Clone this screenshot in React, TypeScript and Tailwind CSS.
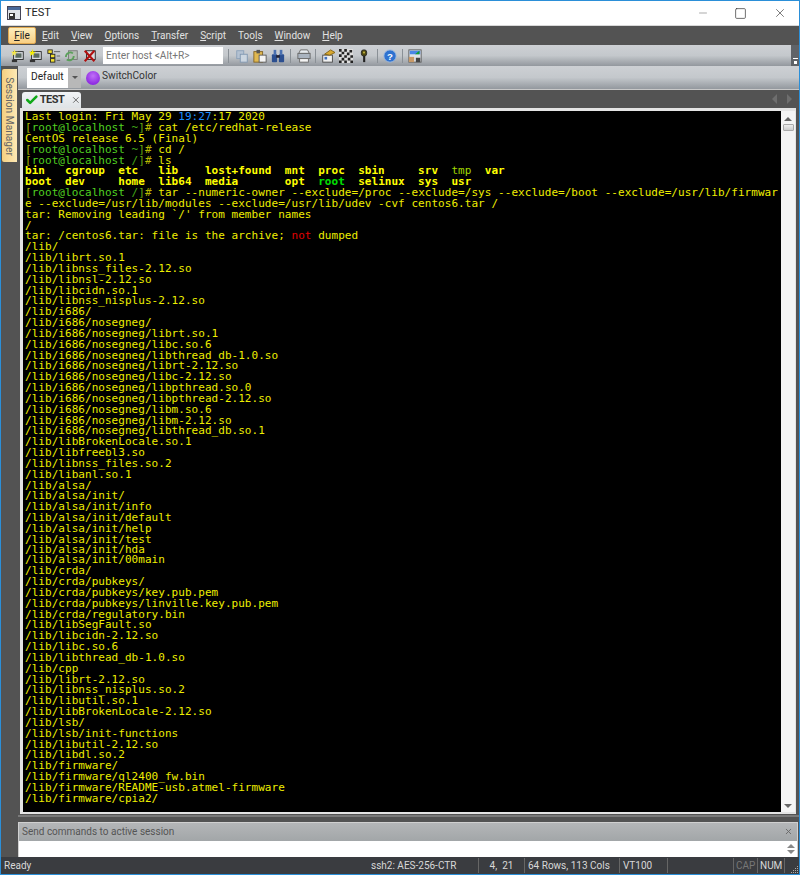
import React from 'react';
import { Check, X, Minus, Square } from 'lucide-react';

type Seg = { t: string; c?: string };

const YELLOW = 'text-[#eeee00]';
const BOLD = 'font-bold text-[#ffff00]';

const prompt = (dir: string): Seg[] => [
  { t: '[', c: 'text-[#a8b800]' },
  { t: 'root@localhost', c: 'text-[#50d020]' },
  { t: ` ${dir}`, c: 'text-[#40a818]' },
  { t: ']', c: 'text-[#68a810]' },
  { t: '#', c: 'text-[#b8b800]' },
];

const paths = `/lib/
/lib/librt.so.1
/lib/libnss_files-2.12.so
/lib/libnsl-2.12.so
/lib/libcidn.so.1
/lib/libnss_nisplus-2.12.so
/lib/i686/
/lib/i686/nosegneg/
/lib/i686/nosegneg/librt.so.1
/lib/i686/nosegneg/libc.so.6
/lib/i686/nosegneg/libthread_db-1.0.so
/lib/i686/nosegneg/librt-2.12.so
/lib/i686/nosegneg/libc-2.12.so
/lib/i686/nosegneg/libpthread.so.0
/lib/i686/nosegneg/libpthread-2.12.so
/lib/i686/nosegneg/libm.so.6
/lib/i686/nosegneg/libm-2.12.so
/lib/i686/nosegneg/libthread_db.so.1
/lib/libBrokenLocale.so.1
/lib/libfreebl3.so
/lib/libnss_files.so.2
/lib/libanl.so.1
/lib/alsa/
/lib/alsa/init/
/lib/alsa/init/info
/lib/alsa/init/default
/lib/alsa/init/help
/lib/alsa/init/test
/lib/alsa/init/hda
/lib/alsa/init/00main
/lib/crda/
/lib/crda/pubkeys/
/lib/crda/pubkeys/key.pub.pem
/lib/crda/pubkeys/linville.key.pub.pem
/lib/crda/regulatory.bin
/lib/libSegFault.so
/lib/libcidn-2.12.so
/lib/libc.so.6
/lib/libthread_db-1.0.so
/lib/cpp
/lib/librt-2.12.so
/lib/libnss_nisplus.so.2
/lib/libutil.so.1
/lib/libBrokenLocale-2.12.so
/lib/lsb/
/lib/lsb/init-functions
/lib/libutil-2.12.so
/lib/libdl.so.2
/lib/firmware/
/lib/firmware/ql2400_fw.bin
/lib/firmware/README-usb.atmel-firmware
/lib/firmware/cpia2/`.split('\n');

const head: Seg[][] = [
  [{ t: 'Last login: Fri May 29 ' }, { t: '19:27', c: 'text-[#1e90ff]' }, { t: ':17 2020' }],
  [...prompt('~'), { t: ' cat /etc/redhat-release' }],
  [{ t: 'CentOS release 6.5 (Final)' }],
  [...prompt('~'), { t: ' cd /' }],
  [...prompt('/'), { t: ' ls' }],
  [{ t: 'bin   cgroup  etc   lib    lost+found  mnt  proc  sbin     srv  ', c: BOLD }, { t: 'tmp', c: 'text-[#a0d800]' }, { t: '  var', c: BOLD }],
  [{ t: 'boot  dev     home  lib64  media       opt  ', c: BOLD }, { t: 'root', c: 'font-bold text-[#00e000]' }, { t: '  selinux  sys  usr', c: BOLD }],
  [...prompt('/'), { t: ' tar --numeric-owner --exclude=/proc --exclude=/sys --exclude=/boot --exclude=/usr/lib/firmwar' }],
  [{ t: 'e --exclude=/usr/lib/modules --exclude=/usr/lib/udev -cvf centos6.tar /' }],
  [{ t: "tar: Removing leading `/' from member names" }],
  [{ t: '/' }],
  [{ t: 'tar: /centos6.tar: file is the archive; ' }, { t: 'not', c: 'text-[#e00000]' }, { t: ' dumped' }],
];

const lines: Seg[][] = [...head, ...paths.map((p) => [{ t: p }])];

const menus: [string, string, string][] = [
  ['', 'F', 'ile'], ['', 'E', 'dit'], ['', 'V', 'iew'], ['', 'O', 'ptions'], ['', 'T', 'ransfer'],
  ['', 'S', 'cript'], ['Too', 'l', 's'], ['', 'W', 'indow'], ['', 'H', 'elp'],
];

const ScreenIcon = ({ accent }: { accent: string }) => (
  <svg width="14" height="14" viewBox="0 0 16 16">
    <rect x="3" y="3" width="11" height="9" fill="#d8dce0" stroke="#222" />
    <rect x="5" y="5" width="7" height="5" fill="#5a6a60" />
    <rect x="1" y="12" width="6" height="3" fill="#333" />
    <path d="M4 0 L5 3 L8 3 L5 5 L6 8 L4 6 L1 8 L2 5 L0 3 L3 3Z" fill={accent} />
  </svg>
);

const Toolbar = () => (
  <div className="flex h-[21px] shrink-0 items-center bg-gradient-to-b from-[#cdd0d4] via-[#c4c8cc] to-[#93989e] pl-[10px]">
    <div className="flex items-center gap-[4px]">
      <ScreenIcon accent="#f6e84a" />
      <ScreenIcon accent="#f6f000" />
      <svg width="14" height="14" viewBox="0 0 16 16">
        <rect x="1" y="1" width="5" height="4" fill="#f4e030" stroke="#222" />
        <rect x="4" y="6" width="5" height="4" fill="#f4e030" stroke="#222" />
        <rect x="4" y="11" width="5" height="4" fill="#f4e030" stroke="#222" />
        <path d="M8 3h7M11 8h4M11 13h4" stroke="#555" />
      </svg>
      <svg width="14" height="14" viewBox="0 0 16 16">
        <rect x="4" y="2" width="10" height="10" fill="#b4bcb4" stroke="#777" />
        <path d="M1 9a5 5 0 0 1 8-4M10 8a5 5 0 0 1-8 4" fill="none" stroke="#5aa05a" strokeWidth="2" />
      </svg>
      <svg width="14" height="14" viewBox="0 0 16 16">
        <rect x="4" y="2" width="10" height="10" fill="#d8dce0" stroke="#222" />
        <path d="M2 2 L13 14 M13 2 L2 14" stroke="#b01010" strokeWidth="2.4" />
      </svg>
    </div>
    <div className="ml-[6px] flex h-[17px] w-[120px] items-center bg-white pl-[3px] text-[#777]">
      Enter host &lt;Alt+R&gt;
    </div>
    <div className="ml-[5px] mr-[6px] h-[14px] w-px bg-[#8a9096]" />
    <div className="flex items-center gap-[4px]">
      <svg width="14" height="14" viewBox="0 0 16 16">
        <rect x="2" y="2" width="8" height="9" fill="#b4c2d2" stroke="#8aa0b8" />
        <rect x="6" y="6" width="8" height="9" fill="#ccd6e0" stroke="#7f96b0" />
      </svg>
      <svg width="14" height="14" viewBox="0 0 16 16">
        <rect x="1" y="3" width="10" height="12" fill="#e0b850" stroke="#806020" />
        <rect x="4" y="1" width="4" height="4" fill="#555" />
        <rect x="7" y="7" width="8" height="8" fill="#f4f4f4" stroke="#555" />
      </svg>
      <svg width="14" height="14" viewBox="0 0 16 16">
        <rect x="1" y="6" width="6" height="9" rx="1" fill="#2c4f90" />
        <rect x="9" y="6" width="6" height="9" rx="1" fill="#2c4f90" />
        <rect x="3" y="1" width="3" height="6" fill="#4a70b0" />
        <rect x="10" y="1" width="3" height="6" fill="#4a70b0" />
        <rect x="6" y="7" width="4" height="3" fill="#223" />
      </svg>
    </div>
    <div className="ml-[5px] mr-[6px] h-[14px] w-px bg-[#8a9096]" />
    <svg width="14" height="14" viewBox="0 0 16 16">
      <path d="M4 1h8l2 4H2z" fill="#e8ecf0" stroke="#666" />
      <rect x="1" y="5" width="14" height="6" fill="#aab4c0" stroke="#666" />
      <rect x="3" y="11" width="10" height="4" fill="#f4f4f4" stroke="#666" />
    </svg>
    <div className="ml-[4px] mr-[5px] h-[14px] w-px bg-[#8a9096]" />
    <div className="flex items-center gap-[4px]">
      <svg width="14" height="14" viewBox="0 0 16 16">
        <rect x="2" y="7" width="11" height="8" fill="#f0f0f0" stroke="#444" />
        <rect x="4" y="9" width="3" height="3" fill="#4070c0" />
        <path d="M4 6 L11 1 L16 4 L10 7z" fill="#d8a830" stroke="#806010" />
      </svg>
      <svg width="14" height="14" viewBox="0 0 16 16">
        <rect width="16" height="16" fill="#dddddd" />
        <path d="M0 0h3v3H0zM6 0h3v3H6zM12 1h3v3h-3zM3 3h3v3H3zM9 4h3v3H9zM0 6h3v3H0zM6 7h3v3H6zM13 7h3v3h-3zM3 10h3v3H3zM10 10h3v3h-3zM0 13h3v3H0zM6 13h3v3H6zM13 13h3v3h-3z" fill="#222" />
      </svg>
      <svg width="14" height="14" viewBox="0 0 16 16">
        <rect x="5" y="1" width="6" height="7" rx="2.5" fill="#504a10" stroke="#222" />
        <rect x="7" y="8" width="2.4" height="7" fill="#222" />
        <rect x="7" y="3" width="2" height="2" fill="#c8b840" />
      </svg>
    </div>
    <div className="ml-[6px] mr-[5px] h-[14px] w-px bg-[#8a9096]" />
    <svg width="14" height="14" viewBox="0 0 16 16">
      <circle cx="8" cy="8" r="7" fill="#2f72d0" stroke="#9ab8e0" />
      <text x="8" y="12" textAnchor="middle" fontSize="11" fontWeight="700" fill="#fff" fontFamily="Liberation Sans, sans-serif">?</text>
    </svg>
    <div className="ml-[5px] mr-[5px] h-[14px] w-px bg-[#8a9096]" />
    <svg width="14" height="14" viewBox="0 0 16 16">
      <rect x="1" y="1" width="14" height="14" fill="#dfe3e8" stroke="#555" />
      <rect x="2" y="2" width="12" height="4" fill="#4a86e8" />
      <rect x="1" y="9" width="6" height="6" fill="#c89a68" />
      <path d="M8 6 L13 2 L13 6z" fill="#10a030" />
      <rect x="9" y="10" width="5" height="5" fill="#444" />
    </svg>
    <div className="ml-auto flex h-full w-[8px] flex-col items-center justify-end bg-[#5f6368] pb-[2px]">
      <div className="mb-[2px] h-px w-[5px] bg-white" />
      <div className="h-[3px] w-[3px] bg-white" />
    </div>
  </div>
);

export default function App() {
  return (
    <div className="flex h-[875px] w-[800px] flex-col overflow-hidden border border-[#2b8fd8] bg-[#535353] text-[10.2px] [font-family:Roboto,sans-serif]">
      {/* Title bar */}
      <div className="flex h-[24px] shrink-0 items-center bg-white pl-[6px]">
        <svg width="14" height="14" viewBox="0 0 14 14">
          <rect x="0.5" y="0.5" width="13" height="13" fill="#dfe3e8" stroke="#445" />
          <rect x="1" y="1" width="12" height="3" fill="#4a6a9a" />
          <rect x="2" y="7" width="6" height="6" fill="#333" />
          <rect x="3" y="8" width="3" height="2" fill="#fff" />
        </svg>
        <span className="ml-[4px] text-[11px] text-[#222]">TEST</span>
        <div className="ml-auto flex items-center">
          <Minus className="mr-[25px] text-[#888]" size={12} strokeWidth={1.4} />
          <Square className="mr-[26px] text-[#333]" size={13} strokeWidth={1.3} />
          <X className="mr-[12px] text-[#333]" size={14} strokeWidth={1.1} />
        </div>
      </div>
      <div className="h-px shrink-0 bg-[#d8d8d8]" />
      {/* Menu */}
      <div className="flex h-[19px] shrink-0 items-center gap-[12px] pl-[7px] text-[10px] text-[#e2e2e2]">
        {menus.map(([a, u, b], i) => (
          <span key={i} className={i === 0 ? 'mr-[-6px] flex h-[17px] w-[28px] items-center justify-center rounded-[2px] border border-[#e0a850] bg-gradient-to-b from-[#fdeebc] to-[#f8cf84] text-[#222]' : ''}>
            {a}<span className="underline">{u}</span>{b}
          </span>
        ))}
      </div>
      <Toolbar />
      <div className="flex min-h-0 flex-1">
        {/* Session Manager tab */}
        <div className="w-[17px] shrink-0 pt-[3px]">
          <div className="ml-px flex h-[93px] w-[15px] items-center justify-center rounded-l-[2px] bg-gradient-to-r from-[#f5d080] to-[#fde9b5] pt-[3px]">
            <span className="rotate-90 whitespace-nowrap text-[#666]">Session Manager</span>
          </div>
        </div>
        <div className="flex min-w-0 flex-1 flex-col">
          {/* Color bar */}
          <div className="flex h-[24px] shrink-0 items-center border-b border-[#c8c8c8] bg-gradient-to-b from-[#cdd0d4] via-[#c4c8cc] to-[#93989e] pl-[9px]">
            <div className="flex h-[20px] w-[41px] items-center bg-white pb-[1px] pl-[4px] text-[#222]">Default</div>
            <div className="flex h-[20px] w-[13px] items-center justify-center bg-[#b8b8b8]">
              <div className="h-0 w-0 border-x-[3px] border-t-[3px] border-x-transparent border-t-[#555]" />
            </div>
            <div className="ml-[5px] h-[14px] w-[14px] rounded-full bg-[radial-gradient(circle_at_50%_35%,#c070f8,#7a10d8)]" />
            <span className="ml-[2px] pb-[3px] text-[#333]">SwitchColor</span>
          </div>
          {/* Tabs */}
          <div className="flex h-[18px] shrink-0 items-end">
            <div className="ml-[4px] flex h-[16px] w-[59px] items-center rounded-t-[3px] bg-gradient-to-b from-[#f2f4f6] to-[#dfe3e6] pl-[3px]">
              <Check className="text-[#10a818]" size={14} strokeWidth={4.5} />
              <span className="ml-px text-[11px] font-bold tracking-[-0.5px] text-[#333]">TEST</span>
              <X className="ml-[7px] text-[#555]" size={10} strokeWidth={2} />
            </div>
            <div className="ml-auto flex items-center gap-[10px] pb-[4px] pr-[7px]">
              <div className="h-0 w-0 border-y-[5px] border-r-[5px] border-y-transparent border-r-[#6e6e6e]" />
              <div className="h-0 w-0 border-y-[5px] border-l-[5px] border-y-transparent border-l-[#6e6e6e]" />
            </div>
          </div>
          {/* Terminal */}
          <div className="ml-[2px] mr-[3px] flex h-[706px] shrink-0 border-b-2 border-l-[3px] border-r border-t-[3px] border-[#e4e4e4]">
            <div className="min-w-0 flex-1 overflow-hidden bg-black pl-[2px] font-['DejaVu_Sans_Mono',monospace] text-[11px] tracking-[0.04px]">
              {lines.map((segs, i) => (
                <div key={i} className={i % 6 === 5 || i === 40 ? 'h-[10px] whitespace-pre leading-[10px]' : 'h-[11px] whitespace-pre leading-[11px]'}>
                  {segs.map((s, j) => (
                    <span key={j} className={s.c ?? YELLOW}>{s.t}</span>
                  ))}
                </div>
              ))}
            </div>
            {/* Scrollbar */}
            <div className="flex w-[14px] shrink-0 flex-col items-center bg-[#f4f4f4] pt-[6px]">
              <div className="h-0 w-0 border-x-[4px] border-b-[4px] border-x-transparent border-b-[#666]" />
              <div className="mt-[3px] h-[7px] w-[11px] rounded-[1px] border border-[#aaa] bg-gradient-to-b from-[#eee] to-[#ccc]" />
              <div className="mb-[4px] mt-auto h-0 w-0 border-x-[4px] border-t-[4px] border-x-transparent border-t-[#666]" />
            </div>
          </div>
          <div className="mt-[1px] h-[2px] shrink-0 bg-[#7a7a7a]" />
          {/* Command window */}
          <div className="mr-[1px] mt-[5px] flex h-[35px] shrink-0 flex-col border-x border-t border-[#d0d0d0]">
            <div className="flex h-[18px] shrink-0 items-center justify-between bg-gradient-to-b from-[#b4b6b8] to-[#a2a6a8] pb-[2px] pl-[3px] pr-[4px] text-[10px] text-[#555]">
              <span>Send commands to active session</span>
              <X className="text-[#666]" size={9} strokeWidth={2.4} />
            </div>
            <div className="flex flex-1 items-center justify-end bg-white pr-[2px]">
              <div className="flex flex-col gap-[2px]">
                <div className="h-0 w-0 border-x-[4px] border-b-[4px] border-x-transparent border-b-[#888]" />
                <div className="h-0 w-0 border-x-[4px] border-t-[4px] border-x-transparent border-t-[#888]" />
              </div>
            </div>
          </div>
        </div>
      </div>
      {/* Status bar */}
      <div className="flex h-[17px] shrink-0 items-center whitespace-pre bg-[#3a3c40] pl-[3px] text-[10px] text-[#d8d8d8]">
        <span className="w-[367px] shrink-0">Ready</span>
        <span className="w-[107px] shrink-0">ssh2: AES-256-CTR</span>
        <span className="flex w-[46px] shrink-0 justify-center border-l border-[#666]">4,  21</span>
        <span className="w-[95px] shrink-0 border-l border-[#666] pl-[3px]">64 Rows, 113 Cols</span>
        <span className="w-[48px] shrink-0 border-l border-[#666] pl-[3px]">VT100</span>
        <span className="w-[66px] shrink-0 border-l border-[#666]">&nbsp;</span>
        <span className="w-[24px] shrink-0 border-l border-[#666] pl-[2px] text-[#777]">CAP</span>
        <span className="w-[28px] shrink-0 border-x border-[#666] pl-[2px]">NUM</span>
        <svg className="ml-auto self-end" width="9" height="9" viewBox="0 0 9 9">
          <path d="M7 1h1v1H7zM5 3h1v1H5zM7 3h1v1H7zM3 5h1v1H3zM5 5h1v1H5zM7 5h1v1H7zM1 7h1v1H1zM3 7h1v1H3zM5 7h1v1H5zM7 7h1v1H7z" fill="#aaa" />
        </svg>
      </div>
    </div>
  );
}
